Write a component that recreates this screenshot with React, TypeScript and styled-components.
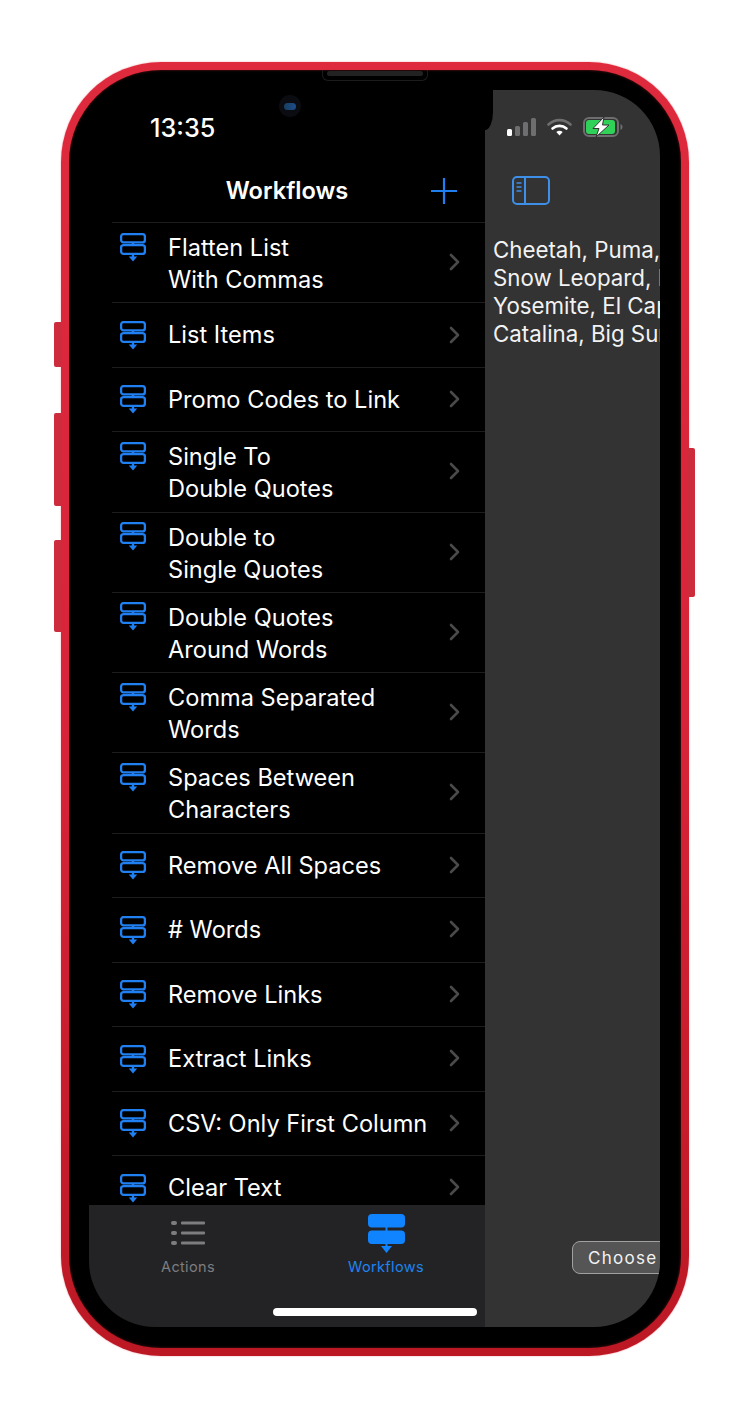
import React from 'react';
import styled, {createGlobalStyle} from 'styled-components';

const GlobalStyle = createGlobalStyle`
	html, body {
		margin: 0;
		padding: 0;
		background: #FFF;
		font-family: Inter, "Liberation Sans", sans-serif;
	}
`;

const Page = styled.div`
	width: 750px;
	height: 1415px;
	padding: 62px 61px 59px;
	box-sizing: border-box;
	overflow: hidden;
`;

const Frame = styled.div`
	position: relative;
	height: 1294px;
	padding: 8px;
	box-sizing: border-box;
	border-radius: 100px;
	background: linear-gradient(180deg, #DE2A3C 0%, #D8243A 50%, #BC1824 100%);
	box-shadow: 0 0 1.5px rgba(220, 40, 60, .6);
`;

const SideButton = styled.div<{$side: 'left' | 'right'; $top: number; $height: number}>`
	position: absolute;
	top: ${p => p.$top}px;
	height: ${p => p.$height}px;
	width: 7px;
	background: #CC2C3C;
	${p => p.$side === 'left' ? 'left: -7px; border-radius: 2px 0 0 2px;' : 'right: -6px; border-radius: 0 2px 2px 0;'}
`;

const Bezel = styled.div`
	position: relative;
	height: 100%;
	padding: 20px 21px 21px 20px;
	box-sizing: border-box;
	border-radius: 92px;
	background: #000;
	box-shadow: inset 0 0 3px rgba(190, 40, 50, .5);
`;

const Notch = styled.div`
	position: absolute;
	top: 0;
	left: 253px;
	width: 106px;
	height: 11px;
	box-sizing: border-box;
	border: 1px solid #1C1C1E;
	border-top: none;
	border-radius: 0 0 6px 6px;
	> div {
		height: 5px;
		margin: 1px 4px 0;
		border-radius: 3px;
		background: #222;
	}
`;

const Camera = styled.div`
	position: absolute;
	top: 25px;
	left: 210px;
	width: 22px;
	height: 22px;
	border-radius: 50%;
	background: #0B0C12;
	display: flex;
	align-items: center;
	justify-content: center;
	> div {
		width: 12px;
		height: 7px;
		border-radius: 4px;
		background: linear-gradient(90deg, #17405F, #1E4C8C);
	}
`;

const HomeBar = styled.div`
	position: absolute;
	left: 204px;
	bottom: 32px;
	width: 204px;
	height: 8px;
	border-radius: 4px;
	background: #FFF;
`;

const Screen = styled.div`
	height: 100%;
	display: flex;
	border-radius: 66px;
	overflow: hidden;
	background: #000;
`;

const Sidebar = styled.div`
	width: 396px;
	flex-shrink: 0;
	display: flex;
	flex-direction: column;
	color: #FFF;
`;

const StatusTime = styled.div`
	height: 70px;
	padding: 21px 0 0 61px;
	box-sizing: border-box;
	font-size: 25.2px;
	line-height: 34px;
	font-weight: 500;
`;

const NavBar = styled.div`
	position: relative;
	height: 62px;
	padding-bottom: 2px;
	box-sizing: border-box;
	display: flex;
	align-items: center;
	justify-content: center;
	font-size: 23.6px;
	font-weight: 600;
	> svg {
		position: absolute;
		left: 342px;
		top: 18px;
	}
`;

const List = styled.div`
	flex: 1;
	min-height: 0;
	overflow: hidden;
	margin-left: 23px;
`;

const Row = styled.div<{$tall: boolean}>`
	height: ${p => p.$tall ? '80.25px' : '64.5px'};
	box-sizing: border-box;
	border-top: 1px solid #1D1D1F;
	padding: ${p => p.$tall ? '9px' : '16px'} 25px 0 8px;
	display: flex;
	align-items: flex-start;
	gap: 22px;
	> .icon {
		width: 26px;
		height: 32px;
		margin-top: ${p => p.$tall ? '-1px' : '0'};
		flex-shrink: 0;
		display: flex;
		align-items: center;
	}
	> .title {
		font-size: 23.6px;
		line-height: 32px;
		white-space: pre;
		margin-right: auto;
	}
	> .chevron {
		align-self: center;
		flex-shrink: 0;
		margin-top: ${p => p.$tall ? '-10px' : '-17px'};
	}
`;

const TabBar = styled.div`
	height: 122px;
	flex-shrink: 0;
	background: #232325;
	display: grid;
	grid-template-columns: 1fr 1fr;
`;

const Tab = styled.div<{$active?: boolean}>`
	display: flex;
	flex-direction: column;
	align-items: center;
	padding-top: 9px;
	color: ${p => p.$active ? '#1E84F0' : '#7D7D80'};
	font-size: 14.5px;
	font-weight: 400;
	letter-spacing: .35px;
	> svg {
		height: 40px;
		margin-bottom: 4px;
	}
`;

const Detail = styled.div`
	position: relative;
	flex: 1;
	min-width: 0;
	display: flex;
	flex-direction: column;
	background: #333;
	color: #F2F2F2;
	overflow: hidden;
`;

const CornerCut = styled.div`
	position: absolute;
	left: 0;
	top: 0;
	width: 8px;
	height: 40px;
	background: #000;
	border-radius: 0 0 8px 0 / 0 0 18px 0;
`;

const StatusIcons = styled.div`
	display: flex;
	align-items: center;
	height: 18px;
	margin-top: 28px;
	padding-left: 22px;
	gap: 11px;
`;

const SidebarButton = styled.div`
	margin: 40px 0 0 27px;
	height: 30px;
`;

const Body = styled.div`
	margin-top: 30px;
	padding-left: 8px;
	font-size: 22.3px;
	line-height: 28px;
	white-space: pre;
`;

const ChooseButton = styled.div`
	margin: auto 0 53px 87px;
	width: 130px;
	height: 33px;
	flex-shrink: 0;
	box-sizing: border-box;
	padding-left: 15px;
	border: 1px solid #A0A0A0;
	border-radius: 8px;
	background: #555;
	font-size: 17px;
	letter-spacing: 1.300px;
	line-height: 32px;
	white-space: nowrap;
`;

const WorkflowIcon = () => (
	<svg width="26" height="29" viewBox="0 0 26 29" fill="none" stroke="#2080F2" strokeWidth="2.300">
		<rect x="1.100" y="1.100" width="23.800" height="8.300" rx="2.500"/>
		<rect x="1.100" y="12.100" width="23.800" height="8.800" rx="2.500"/>
		<path d="M13 9.400v2.700M13 21v3"/>
		<path d="M8.800 23.500h8.400l-4.200 5z" fill="#2080F2" stroke="none"/>
	</svg>
);

const Chevron = () => (
	<svg className="chevron" width="11" height="18" viewBox="0 0 11 18" fill="none" stroke="#4A4A4C" strokeWidth="2.600" strokeLinecap="round" strokeLinejoin="round">
		<path d="M2 2l7 7-7 7"/>
	</svg>
);

const Signal = () => (
	<svg width="29" height="18" viewBox="0 0 29 18" fill="#6E6E70">
		<rect x="0" y="11" width="5" height="7" rx="1.500" fill="#FFF"/>
		<rect x="8" y="8" width="5" height="10" rx="1.500"/>
		<rect x="16" y="4" width="5" height="14" rx="1.500"/>
		<rect x="24" y="0" width="5" height="18" rx="1.500"/>
	</svg>
);

const Wifi = () => (
	<svg width="25" height="18" viewBox="0 0 25 18" fill="none" strokeLinecap="round">
		<path d="M1.500 6.500a16 16 0 0 1 22 0" stroke="#6E6E70" strokeWidth="2.600"/>
		<path d="M5.500 10.500a10.500 10.500 0 0 1 14 0" stroke="#FFF" strokeWidth="2.600"/>
		<path d="M9.300 14a5 5 0 0 1 6.400 0l-3.200 3.500z" fill="#FFF"/>
	</svg>
);

const Battery = () => (
	<svg width="40" height="20" viewBox="0 0 40 20" fill="none">
		<rect x="1" y="1" width="34" height="18" rx="5" stroke="#6E6E70" strokeWidth="2"/>
		<rect x="3" y="3" width="29" height="14" rx="3" fill="#30D158"/>
		<path d="M37.500 7c1.200.4 2 1.700 2 3s-.8 2.600-2 3z" fill="#6E6E70"/>
		<path d="M21 0L10 11.500h6L13 20 26 8h-6.500z" fill="#FFF" stroke="#333" strokeWidth="1"/>
	</svg>
);

const SidebarIcon = () => (
	<svg width="38" height="30" viewBox="0 0 38 30" fill="none" stroke="#3D8FE8" strokeWidth="2">
		<rect x="1" y="1" width="36" height="27" rx="4"/>
		<path d="M13 1v27"/>
		<path d="M4.500 7h5M4.500 11h5M4.500 15h5" strokeWidth="1.500"/>
	</svg>
);

const ListTabIcon = () => (
	<svg width="36" height="40" viewBox="0 0 36 40" fill="#7D7D80">
		<rect x="1" y="7" width="6" height="4" rx="2"/>
		<rect x="11" y="7.500" width="24" height="3" rx="1"/>
		<rect x="1" y="17" width="6" height="4" rx="2"/>
		<rect x="11" y="17.500" width="24" height="3" rx="1"/>
		<rect x="1" y="27" width="6" height="4" rx="2"/>
		<rect x="11" y="27.500" width="24" height="3" rx="1"/>
	</svg>
);

const WorkflowTabIcon = () => (
	<svg width="37" height="40" viewBox="0 0 37 40" fill="#1084FF">
		<rect x="0" y="0" width="37" height="13.500" rx="4"/>
		<rect x="0" y="16.500" width="37" height="13.500" rx="4"/>
		<rect x="17.500" y="13" width="2" height="4"/>
		<rect x="17.500" y="29" width="2" height="4"/>
		<path d="M13 32h11l-5.500 7z"/>
	</svg>
);

const workflows = [
	'Flatten List\nWith Commas',
	'List Items',
	'Promo Codes to Link',
	'Single To\nDouble Quotes',
	'Double to\nSingle Quotes',
	'Double Quotes\nAround Words',
	'Comma Separated\nWords',
	'Spaces Between\nCharacters',
	'Remove All Spaces',
	'# Words',
	'Remove Links',
	'Extract Links',
	'CSV: Only First Column',
	'Clear Text',
];

export default function App() {
	return (
		<Page>
			<GlobalStyle/>
			<Frame>
				<SideButton $side="left" $top={260} $height={45}/>
				<SideButton $side="left" $top={351} $height={93}/>
				<SideButton $side="left" $top={478} $height={92}/>
				<SideButton $side="right" $top={386} $height={149}/>
				<Bezel>
					<Screen>
						<Sidebar>
							<StatusTime>13:35</StatusTime>
							<NavBar>
								Workflows
								<svg width="26" height="26" viewBox="0 0 26 26" stroke="#1F7FEF" strokeWidth="2.200">
									<path d="M13 0v26M0 13h26"/>
								</svg>
							</NavBar>
							<List>
								{workflows.map(name =>
									<Row key={name} $tall={name.includes('\n')}>
										<div className="icon"><WorkflowIcon/></div>
										<div className="title">{name}</div>
										<Chevron/>
									</Row>)}
							</List>
							<TabBar>
								<Tab><ListTabIcon/>Actions</Tab>
								<Tab $active><WorkflowTabIcon/>Workflows</Tab>
							</TabBar>
						</Sidebar>
						<Detail>
							<CornerCut/>
							<StatusIcons>
								<Signal/>
								<Wifi/>
								<Battery/>
							</StatusIcons>
							<SidebarButton><SidebarIcon/></SidebarButton>
							<Body>{'Cheetah, Puma,\nSnow Leopard, L\nYosemite, El Capitan\nCatalina, Big Sur'}</Body>
							<ChooseButton>Choose</ChooseButton>
						</Detail>
					</Screen>
					<Notch><div/></Notch>
					<Camera><div/></Camera>
					<HomeBar/>
				</Bezel>
			</Frame>
		</Page>
	);
}
